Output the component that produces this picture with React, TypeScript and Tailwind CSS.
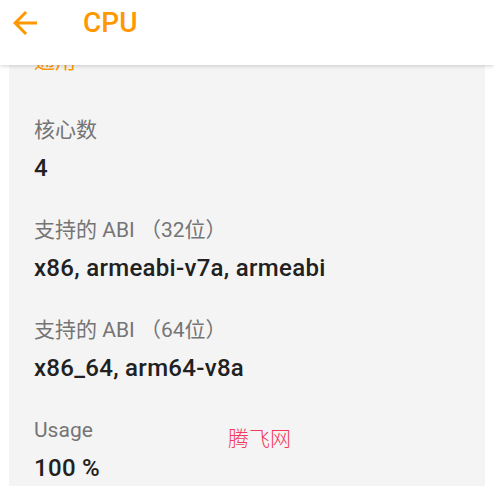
import React from 'react'

const items = [
  { label: '核心数', value: '4' },
  { label: '支持的 ABI （32位）', value: 'x86, armeabi-v7a, armeabi' },
  { label: '支持的 ABI （64位）', value: 'x86_64, arm64-v8a' },
  { label: 'Usage', value: '100 %' },
]

function BackArrow() {
  return (
    <svg viewBox="0 0 24 24" className="w-[36px] h-[36px]" fill="#ff9800">
      <path d="M20 11H7.83l5.59-5.59L12 4l-8 8 8 8 1.41-1.41L7.83 13H20v-2z" />
    </svg>
  )
}

export default function App() {
  return (
    <div className="relative w-[494px] h-[486px] overflow-hidden bg-white font-['Roboto','Noto_Sans_CJK_SC',sans-serif]">
      {/* toolbar */}
      <header className="relative z-10 h-[65px] bg-white shadow-[0_1px_4px_rgba(0,0,0,0.18)] flex items-start">
        <div className="ml-[7px] mt-[5px]">
          <BackArrow />
        </div>
        <h1 className="ml-[40px] mt-[9px] text-[28px] leading-[28px] font-medium text-[#ff9800]">CPU</h1>
      </header>

      {/* list panel, scrolled under the toolbar */}
      <div className="-mt-[65px] mx-[9px] h-[560px] bg-[#f4f4f4] pl-[25px] pt-[51px]">
        <div className="text-[21px] leading-[21px] text-[#ff9800]">通用</div>
        <div className="mt-[48px] flex flex-col gap-[40px]">
          {items.map((it) => (
            <div key={it.label} className="flex flex-col gap-[15px]">
              <div className="text-[21px] leading-[21px] text-[#757575] whitespace-pre">{it.label}</div>
              <div className="text-[24px] leading-[24px] tracking-[0.3px] font-medium text-[#212121]">{it.value}</div>
            </div>
          ))}
        </div>
      </div>

      {/* watermark */}
      <div className="absolute left-[228px] top-[427px] text-[21px] leading-[21px] font-light text-[#f23a5a] font-['Noto_Sans_CJK_SC',sans-serif]">
        腾飞网
      </div>
    </div>
  )
}
